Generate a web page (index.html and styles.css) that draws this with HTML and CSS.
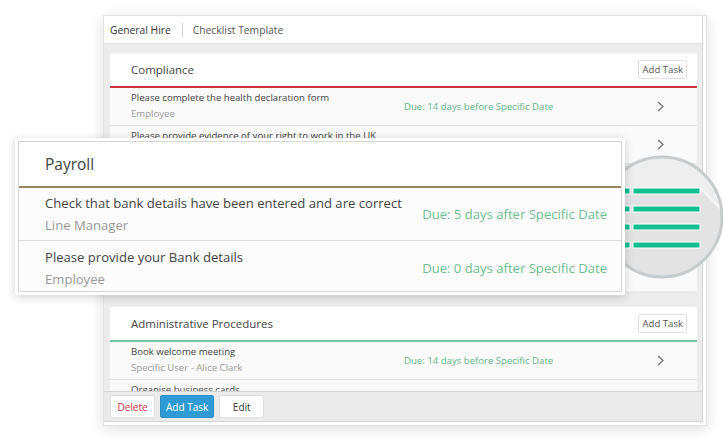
FILE: index.html
```html
<!DOCTYPE html>
<html lang="en">
<head>
  <meta charset="UTF-8">
  <title>Checklist Template</title>
  <link rel="stylesheet" href="styles.css">
</head>
<body>
  <!-- Background window -->
  <div class="window">
    <div class="panel">
      <div class="crumbs">
        <span class="crumb-main">General Hire</span>
        <span class="crumb-sep"></span>
        <span class="crumb-sub">Checklist Template</span>
      </div>

      <div class="panel-body">
        <div class="card">
          <div class="card-head line-red">
            <span class="card-title">Compliance</span>
            <button class="small-btn">Add Task</button>
          </div>
          <div class="task">
            <div class="task-text">
              <div class="task-name">Please complete the health declaration form</div>
              <div class="task-who">Employee</div>
            </div>
            <div class="task-due">Due: 14 days before Specific Date</div>
            <svg class="chev" width="7" height="11" viewBox="0 0 7 11"><polyline points="1,1 6,5.5 1,10" fill="none" stroke="#777" stroke-width="1.4"/></svg>
          </div>
          <div class="task">
            <div class="task-text">
              <div class="task-name">Please provide evidence of your right to work in the UK</div>
            </div>
            <div class="task-due"></div>
            <svg class="chev" width="7" height="11" viewBox="0 0 7 11"><polyline points="1,1 6,5.5 1,10" fill="none" stroke="#777" stroke-width="1.4"/></svg>
          </div>
        </div>

        <!-- small Payroll card, covered by the zoomed copy -->
        <div class="card card-hidden">
          <div class="card-head line-brown"></div>
        </div>

        <div class="card">
          <div class="card-head line-green">
            <span class="card-title">Administrative Procedures</span>
            <button class="small-btn">Add Task</button>
          </div>
          <div class="task">
            <div class="task-text">
              <div class="task-name">Book welcome meeting</div>
              <div class="task-who">Specific User - Alice Clark</div>
            </div>
            <div class="task-due">Due: 14 days before Specific Date</div>
            <svg class="chev" width="7" height="11" viewBox="0 0 7 11"><polyline points="1,1 6,5.5 1,10" fill="none" stroke="#777" stroke-width="1.4"/></svg>
          </div>
          <div class="task">
            <div class="task-text">
              <div class="task-name">Organise business cards</div>
            </div>
          </div>
        </div>
      </div>

      <div class="toolbar">
        <button class="tool-btn btn-delete">Delete</button>
        <button class="tool-btn btn-add">Add Task</button>
        <button class="tool-btn">Edit</button>
      </div>
    </div>
  </div>

  <!-- Magnifier with the drag handle -->
  <svg class="magnifier" width="126" height="126" viewBox="0 0 126 126">
    <defs>
      <clipPath id="lens"><circle cx="63" cy="63" r="60"/></clipPath>
    </defs>
    <circle cx="63" cy="63" r="60" fill="#eeeeee"/>
    <g clip-path="url(#lens)">
      <polygon points="0,34 101,34 160,93 160,200 60,200 0,140" fill="#e3e3e3"/>
      <polyline points="101,34 140,73" stroke="#f7f7f7" stroke-width="2"/>
      <g fill="#13bf8f" stroke="#ffffff" stroke-width="1">
        <rect x="4" y="34" width="27" height="6"/>
        <rect x="34" y="34" width="67" height="6"/>
        <rect x="4" y="52" width="27" height="6"/>
        <rect x="34" y="52" width="67" height="6"/>
        <rect x="4" y="70" width="27" height="6"/>
        <rect x="34" y="70" width="67" height="6"/>
        <rect x="4" y="88" width="27" height="6"/>
        <rect x="34" y="88" width="67" height="6"/>
      </g>
    </g>
    <circle cx="63" cy="63" r="60" fill="none" stroke="#c6cbce" stroke-width="3"/>
  </svg>

  <!-- Zoomed Payroll section -->
  <div class="zoom">
    <div class="zoom-inner">
      <div class="zoom-head">Payroll</div>
      <div class="zoom-task">
        <div class="task-text">
          <div class="zoom-name">Check that bank details have been entered and are correct</div>
          <div class="zoom-who">Line Manager</div>
        </div>
        <div class="zoom-due">Due: 5 days after Specific Date</div>
      </div>
      <div class="zoom-task">
        <div class="task-text">
          <div class="zoom-name">Please provide your Bank details</div>
          <div class="zoom-who">Employee</div>
        </div>
        <div class="zoom-due">Due: 0 days after Specific Date</div>
      </div>
    </div>
  </div>
</body>
</html>
```

FILE: styles.css
```css
body {
  margin: 0;
  width: 723px;
  height: 441px;
  position: relative;
  overflow: hidden;
  background-color: #ffffff;
  font-family: "Open Sans", "DejaVu Sans", sans-serif;
  color: #444;
}
button {
  font-family: inherit;
  cursor: pointer;
}
.window {
  position: absolute;
  left: 103px;
  top: 15px;
  width: 599px;
  height: 406px;
  padding: 0 3px 3px 0;
  background-color: #ffffff;
  border: 1px solid #e2e2e2;
  box-shadow: 0 3px 14px rgba(0, 0, 0, 0.13);
}
.panel {
  height: 100%;
  display: flex;
  flex-direction: column;
  border-right: 1px solid #d6d6d6;
  border-bottom: 1px solid #d6d6d6;
  box-sizing: border-box;
}
.crumbs {
  height: 27px;
  display: flex;
  align-items: center;
  padding-left: 6px;
  background-color: #ffffff;
  border-bottom: 1px solid #dedede;
  font-size: 10.3px;
}
.crumb-main {
  color: #333;
}
.crumb-sep {
  width: 1px;
  height: 14px;
  background-color: #d0d0d0;
  margin: 0 10px 0 11px;
}
.crumb-sub {
  color: #555;
}
.panel-body {
  flex: 1;
  overflow: hidden;
  background-color: #ececec;
  padding: 9px 5px 0 6px;
}
.card {
  background-color: #fafafa;
  border-radius: 3px;
  margin-bottom: 8px;
  overflow: hidden;
}
.card-hidden {
  height: 119px;
  margin-bottom: 16px;
}
.card-head {
  height: 33px;
  display: flex;
  align-items: center;
  justify-content: space-between;
  padding: 0 10px 0 21px;
  background-color: #ffffff;
}
.line-red {
  border-bottom: 2px solid #d0343f;
}
.line-brown {
  border-bottom: 2px solid #9b8466;
}
.line-green {
  border-bottom: 2px solid #76c3a0;
}
.card-title {
  font-size: 11.5px;
  color: #444;
}
.small-btn {
  height: 19px;
  padding: 0 3px;
  font-size: 9.6px;
  color: #555;
  background-color: #ffffff;
  border: 1px solid #e0e0e0;
  border-radius: 2px;
}
.task {
  height: 38px;
  display: flex;
  align-items: center;
  padding-left: 21px;
  border-bottom: 1px solid #e2e2e2;
  box-sizing: border-box;
}
.task-text {
  align-self: flex-start;
  padding-top: 2px;
  width: 273px;
  flex-shrink: 0;
  white-space: nowrap;
}
.task-name {
  font-size: 9.6px;
  color: #444;
  line-height: 16px;
}
.task-who {
  font-size: 9.6px;
  color: #9a9a9a;
  line-height: 16px;
}
.task-due {
  width: 253px;
  font-size: 9.6px;
  color: #5fb587;
}
.chev {
  display: block;
}
.toolbar {
  height: 29px;
  display: flex;
  align-items: center;
  gap: 5px;
  padding-left: 6px;
  background-color: #ebebeb;
  border-top: 1px solid #d4d4d4;
}
.tool-btn {
  height: 23px;
  min-width: 45px;
  padding: 0 5px;
  font-size: 10px;
  color: #333;
  background-color: #ffffff;
  border: 1px solid #e0e0e0;
  border-radius: 2px;
}
.btn-delete {
  color: #d3303c;
}
.btn-add {
  color: #ffffff;
  background-color: #2e9bd4;
  border-color: #2a8fc4;
}
.magnifier {
  position: absolute;
  left: 599px;
  top: 154px;
}
.zoom {
  position: absolute;
  left: 15px;
  top: 138px;
  width: 604px;
  height: 151px;
  padding: 3px;
  background-color: #ffffff;
  box-shadow: 0 2px 10px rgba(0, 0, 0, 0.18);
  border-radius: 2px;
}
.zoom-inner {
  height: 100%;
  border: 1px solid #d6d6d6;
  box-sizing: border-box;
  background-color: #fcfcfc;
}
.zoom-head {
  height: 44px;
  display: flex;
  align-items: center;
  padding-left: 26px;
  font-size: 15.5px;
  color: #444;
  background-color: #ffffff;
  border-bottom: 2px solid #9b8466;
}
.zoom-task {
  height: 53px;
  display: flex;
  align-items: center;
  padding-left: 26px;
  border-bottom: 1px solid #dcdcdc;
  box-sizing: border-box;
}
.zoom-task:last-child {
  border-bottom: none;
  height: 50px;
  padding-top: 3px;
}
.zoom-task .task-text {
  align-self: center;
  padding-top: 0;
  width: auto;
  flex: 1;
}
.zoom-name {
  font-size: 13.1px;
  color: #444;
  line-height: 22px;
}
.zoom-who {
  font-size: 13.1px;
  color: #999;
  line-height: 22px;
}
.zoom-due {
  font-size: 13.1px;
  color: #6dbf8d;
  padding: 0 14px 0 10px;
}
```
